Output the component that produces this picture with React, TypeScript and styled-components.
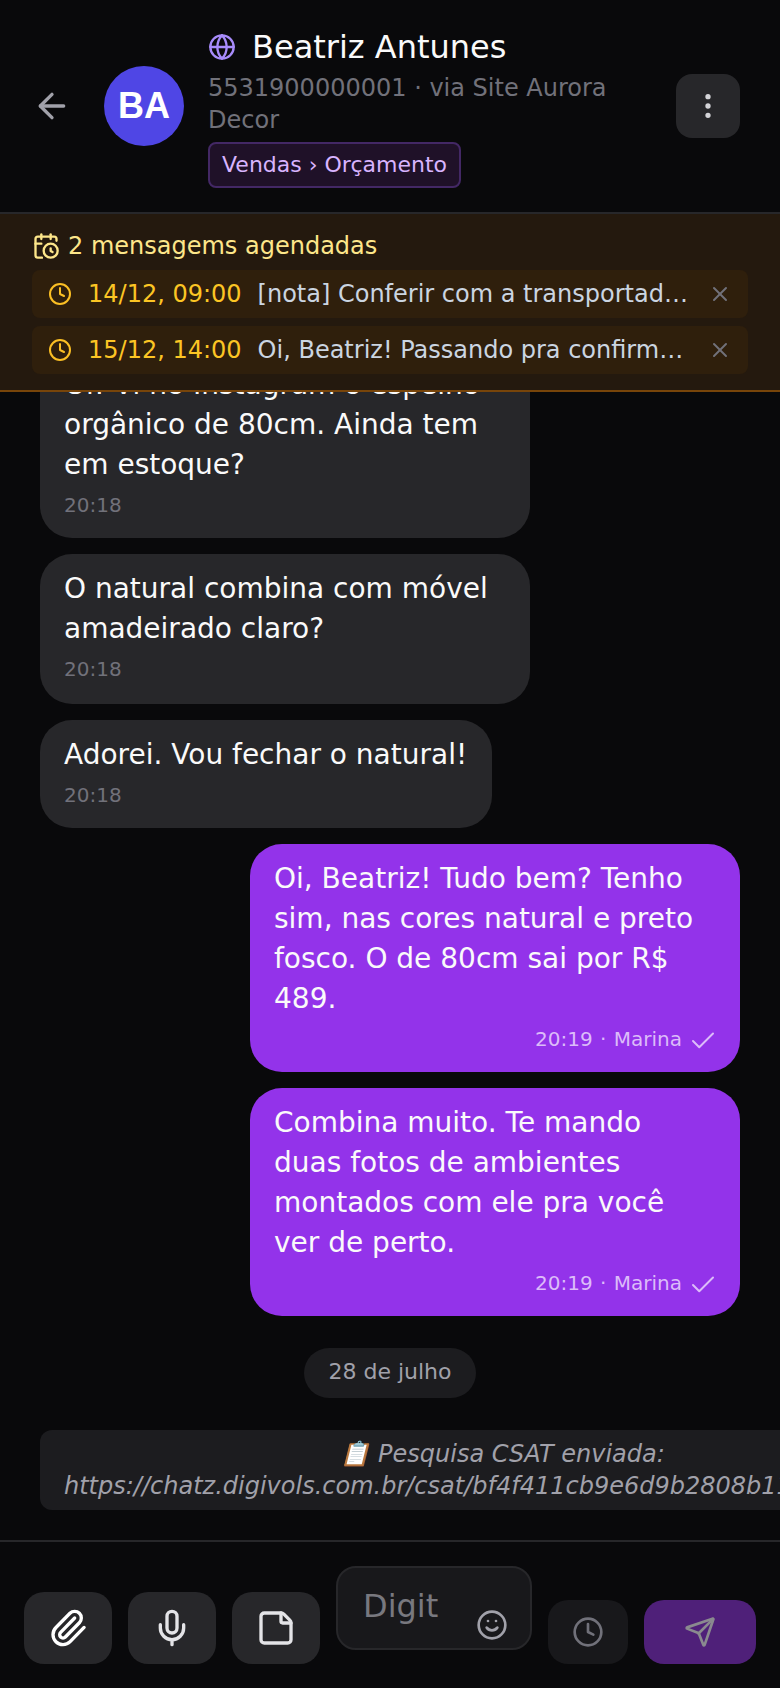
import React from "react";
import styled, { createGlobalStyle } from "styled-components";
import {
  ArrowLeft,
  CalendarClock,
  Check,
  Clock,
  EllipsisVertical,
  Globe,
  Mic,
  Paperclip,
  Send,
  Smile,
  StickyNote,
  X,
} from "lucide-react";

const GlobalStyle = createGlobalStyle`
  html, body {
    margin: 0;
    padding: 0;
    background: #09090b;
  }
  * {
    box-sizing: border-box;
  }
`;

const Page = styled.div`
  display: flex;
  flex-direction: column;
  width: 780px;
  height: 1688px;
  overflow: hidden;
  background: #09090b;
  color: #fafafa;
  font-family: "DejaVu Sans", sans-serif;
`;

const Header = styled.header`
  display: flex;
  align-items: center;
  height: 214px;
  padding: 0 40px 0 32px;
  flex-shrink: 0;
  border-bottom: 2px solid #27272a;
`;

const BackButton = styled.div`
  display: flex;
  width: 40px;
  justify-content: center;
  color: #a1a1aa;
  margin-right: 32px;
`;

const Avatar = styled.div`
  display: flex;
  align-items: center;
  justify-content: center;
  width: 80px;
  height: 80px;
  border-radius: 50%;
  background: #4f46e5;
  color: #fff;
  font-family: "Liberation Sans", sans-serif;
  font-weight: 700;
  font-size: 36px;
  flex-shrink: 0;
  margin-right: 24px;
`;

const Info = styled.div`
  display: flex;
  flex-direction: column;
  align-items: flex-start;
  flex: 1;
  min-width: 0;
  padding-top: 2px;
`;

const NameRow = styled.div`
  display: flex;
  align-items: center;
  gap: 16px;
  font-size: 32px;
  line-height: 40px;
  color: #fafafa;
  svg {
    color: #a78bfa;
  }
`;

const Phone = styled.div`
  font-size: 24px;
  line-height: 32px;
  color: #71717a;
  width: 420px;
  margin-top: 5px;
`;

const Tag = styled.div`
  margin-top: 6px;
  padding: 0 12px;
  height: 46px;
  display: flex;
  align-items: center;
  font-size: 22px;
  color: #d8b4fe;
  background: #1f1128;
  border: 2px solid #432865;
  border-radius: 8px;
`;

const MoreButton = styled.div`
  display: flex;
  align-items: center;
  justify-content: center;
  width: 64px;
  height: 64px;
  border-radius: 16px;
  background: #27272a;
  color: #d4d4d8;
  flex-shrink: 0;
`;

const Banner = styled.section`
  display: flex;
  flex-direction: column;
  gap: 8px;
  flex-shrink: 0;
  height: 178px;
  padding: 16px 32px 16px;
  background: #24190e;
  border-bottom: 2px solid #78450a;
`;

const BannerTitle = styled.div`
  display: flex;
  align-items: center;
  gap: 8px;
  font-size: 24px;
  line-height: 32px;
  color: #fde68a;
`;

const ScheduledRow = styled.div`
  display: flex;
  align-items: center;
  height: 48px;
  padding: 0 16px;
  border-radius: 8px;
  background: #2f1f0c;
  font-size: 24px;
  svg.clock {
    color: #fbbf24;
    flex-shrink: 0;
  }
`;

const ScheduledDate = styled.span`
  color: #fcc524;
  margin: 0 16px;
  white-space: nowrap;
`;

const ScheduledText = styled.span`
  flex: 1;
  min-width: 0;
  color: #cbd5e1;
  white-space: nowrap;
  overflow: hidden;
  text-overflow: ellipsis;
`;

const Dismiss = styled.span`
  display: flex;
  color: #71717a;
  margin-left: 20px;
`;

const Messages = styled.main`
  display: flex;
  flex-direction: column;
  justify-content: flex-end;
  flex: 1;
  min-height: 0;
  overflow: hidden;
  padding: 0 40px 30px;
`;

const Bubble = styled.div<{ $out?: boolean; $w?: number; $pad?: number }>`
  flex-shrink: 0;
  align-self: ${(p) => (p.$out ? "flex-end" : "flex-start")};
  width: ${(p) => p.$w ?? 490}px;
  margin-bottom: 16px;
  padding: 15px 24px ${(p) => p.$pad ?? 19}px;
  border-radius: 32px;
  background: ${(p) => (p.$out ? "#9333ea" : "#27272a")};
  color: #fafafa;
  font-size: 28px;
  line-height: 40px;
`;

const Meta = styled.div<{ $out?: boolean }>`
  display: flex;
  align-items: center;
  justify-content: ${(p) => (p.$out ? "flex-end" : "flex-start")};
  gap: 6px;
  height: 28px;
  margin-top: 6px;
  margin-right: ${(p) => (p.$out ? "-2px" : "0")};
  font-size: 20px;
  line-height: 28px;
  word-spacing: 1px;
  color: ${(p) => (p.$out ? "#dcbcf9" : "#71717a")};
  svg {
    margin-top: 4px;
  }
`;

const DatePill = styled.div`
  flex-shrink: 0;
  align-self: center;
  display: flex;
  align-items: center;
  height: 50px;
  padding: 0 24px 4px;
  margin-top: 16px;
  margin-bottom: 32px;
  border-radius: 25px;
  background: #1c1c1f;
  color: #a1a1aa;
  font-size: 22px;
`;

const SystemNote = styled.div`
  flex-shrink: 0;
  align-self: flex-start;
  width: min-content;
  padding: 8px 24px;
  border-radius: 12px;
  background: #1c1c1f;
  color: #a1a1aa;
  font-size: 24px;
  font-style: italic;
  line-height: 32px;
  text-align: center;
`;

const Composer = styled.footer`
  display: flex;
  align-items: flex-end;
  gap: 16px;
  height: 148px;
  flex-shrink: 0;
  padding: 0 24px 24px;
  border-top: 2px solid #27272a;
`;

const ToolButton = styled.div`
  display: flex;
  align-items: center;
  justify-content: center;
  width: 88px;
  height: 72px;
  border-radius: 20px;
  background: #27272a;
  color: #e4e4e7;
  flex-shrink: 0;
`;

const InputBox = styled.div`
  position: relative;
  width: 196px;
  height: 84px;
  margin-bottom: 14px;
  padding: 16px 25px;
  border: 2px solid #27272a;
  border-radius: 20px;
  background: #18181b;
  color: #78787f;
  font-size: 32px;
  line-height: 44px;
  flex-shrink: 0;
`;

const EmojiButton = styled.span`
  position: absolute;
  right: 22px;
  bottom: 7px;
  display: flex;
  color: #a1a1aa;
`;

const ScheduleButton = styled.div`
  display: flex;
  align-items: center;
  justify-content: center;
  width: 80px;
  height: 64px;
  border-radius: 20px;
  background: #18181b;
  color: #71717a;
  flex-shrink: 0;
`;

const SendButton = styled.div`
  display: flex;
  align-items: center;
  justify-content: center;
  width: 112px;
  height: 64px;
  border-radius: 20px;
  background: #4f2079;
  color: #8a8a8f;
  flex-shrink: 0;
`;

const inbound = [
  {
    text: "Oi! Vi no Instagram o espelho orgânico de 80cm. Ainda tem em estoque?",
  },
  { text: "O natural combina com móvel amadeirado claro?", pad: 21 },
  { text: "Adorei. Vou fechar o natural!", width: 452 },
];

const outbound = [
  "Oi, Beatriz! Tudo bem? Tenho sim, nas cores natural e preto fosco. O de 80cm sai por R$ 489.",
  "Combina muito. Te mando duas fotos de ambientes montados com ele pra você ver de perto.",
];

const scheduled = [
  { date: "14/12, 09:00", text: "[nota] Conferir com a transportadora o prazo de entrega" },
  { date: "15/12, 14:00", text: "Oi, Beatriz! Passando pra confirmar a entrega do espelho" },
];

export default function App() {
  return (
    <Page>
      <GlobalStyle />
      <Header>
        <BackButton>
          <ArrowLeft size={40} strokeWidth={2} />
        </BackButton>
        <Avatar>BA</Avatar>
        <Info>
          <NameRow>
            <Globe size={28} />
            Beatriz Antunes
          </NameRow>
          <Phone>5531900000001 · via Site Aurora Decor</Phone>
          <Tag>Vendas › Orçamento</Tag>
        </Info>
        <MoreButton>
          <EllipsisVertical size={32} />
        </MoreButton>
      </Header>

      <Banner>
        <BannerTitle>
          <CalendarClock size={28} />
          2 mensagems agendadas
        </BannerTitle>
        {scheduled.map((item) => (
          <ScheduledRow key={item.date}>
            <Clock className="clock" size={24} />
            <ScheduledDate>{item.date}</ScheduledDate>
            <ScheduledText>{item.text}</ScheduledText>
            <Dismiss>
              <X size={24} />
            </Dismiss>
          </ScheduledRow>
        ))}
      </Banner>

      <Messages>
        {inbound.map((msg) => (
          <Bubble key={msg.text} $w={msg.width} $pad={msg.pad}>
            {msg.text}
            <Meta>20:18</Meta>
          </Bubble>
        ))}
        {outbound.map((text) => (
          <Bubble key={text} $out>
            {text}
            <Meta $out>
              20:19 · Marina
              <Check size={30} strokeWidth={1.6} />
            </Meta>
          </Bubble>
        ))}
        <DatePill>28 de julho</DatePill>
        <SystemNote>
          📋 Pesquisa CSAT enviada:
          https://chatz.digivols.com.br/csat/bf4f411cb9e6d9b2808b117a4c2e90d1
        </SystemNote>
      </Messages>

      <Composer>
        <ToolButton>
          <Paperclip size={40} color="#fff" />
        </ToolButton>
        <ToolButton>
          <Mic size={40} />
        </ToolButton>
        <ToolButton>
          <StickyNote size={40} />
        </ToolButton>
        <InputBox>
          Digit
          <EmojiButton>
            <Smile size={32} />
          </EmojiButton>
        </InputBox>
        <ScheduleButton>
          <Clock size={32} />
        </ScheduleButton>
        <SendButton>
          <Send size={32} />
        </SendButton>
      </Composer>
    </Page>
  );
}
